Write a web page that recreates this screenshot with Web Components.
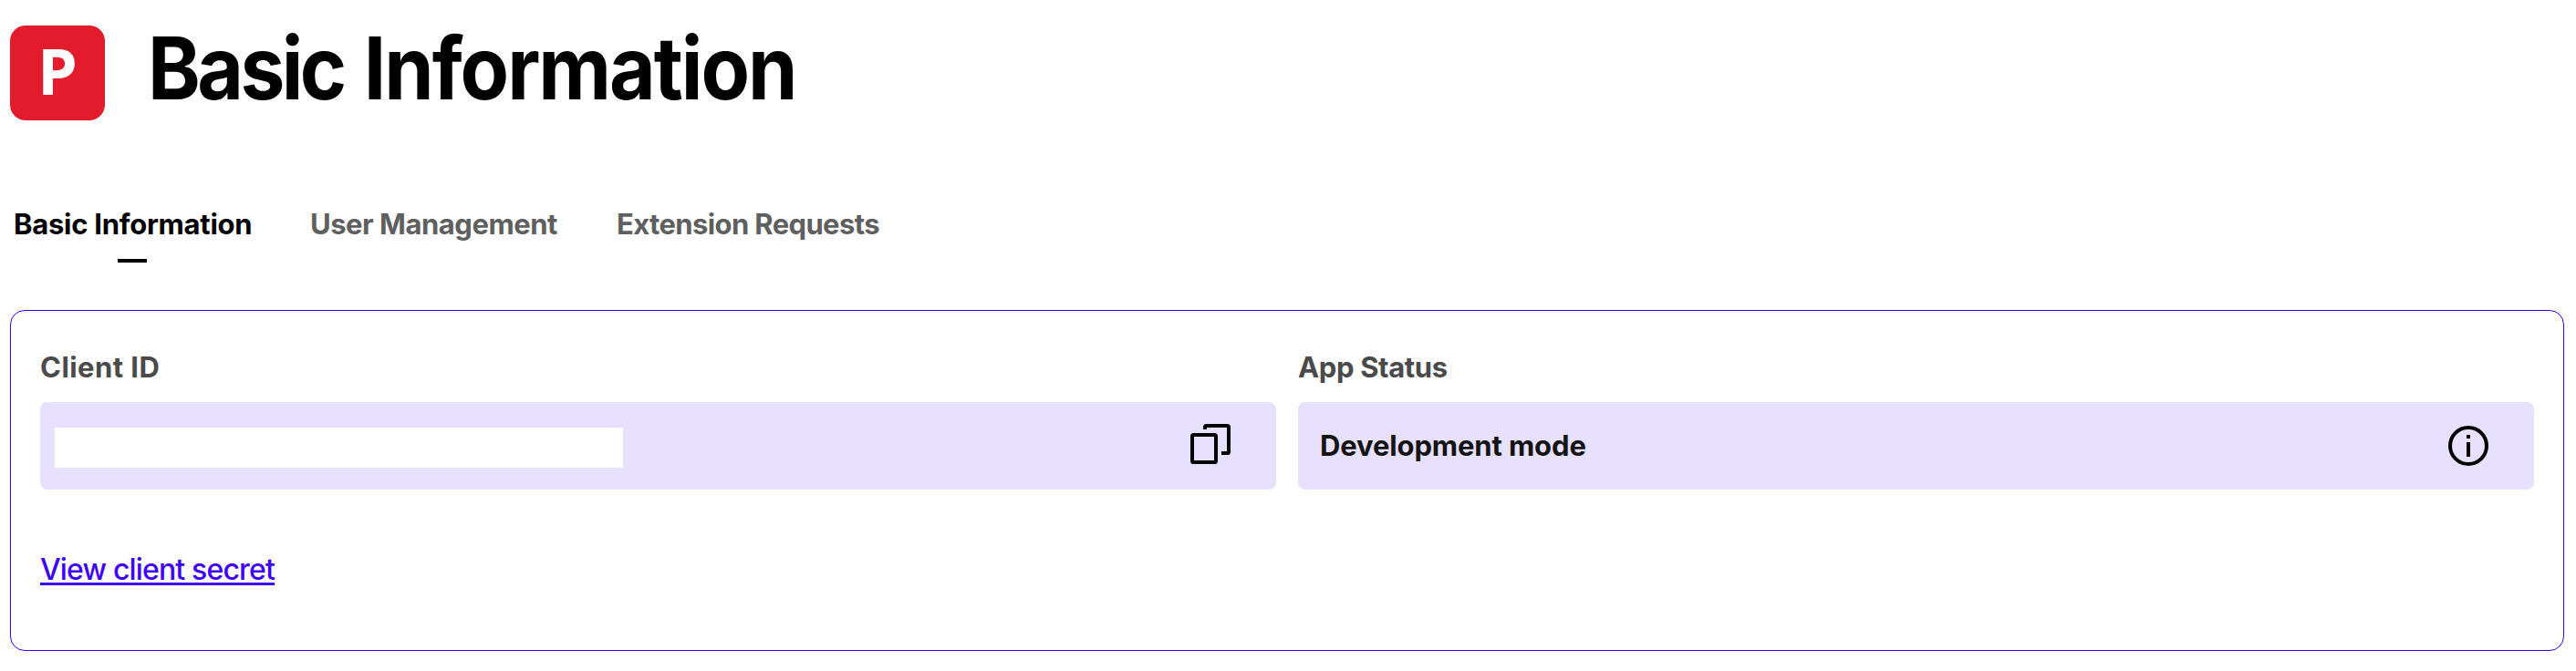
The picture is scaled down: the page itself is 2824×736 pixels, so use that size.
<!DOCTYPE html>
<html lang="en">
<head>
<meta charset="utf-8">
<title>Basic Information</title>
<style>
body { margin: 0; background: #fff; font-family: Inter, "Liberation Sans", sans-serif; }
</style>
</head>
<body>
<app-page>
  <app-header letter="P"><span style="letter-spacing:-3.9px">Basic</span> Information</app-header>
  <app-tabs>
    <app-tab active style="width:260px;letter-spacing:-.26px">Basic Information</app-tab>
    <app-tab style="width:272px;letter-spacing:-.48px">User Management</app-tab>
    <app-tab style="width:292px;letter-spacing:-.62px">Extension Requests</app-tab>
  </app-tabs>
  <app-card>
    <app-field label="Client ID" style="--label-spacing:.45px">
      <span slot="value"><masked-value></masked-value></span>
      <copy-icon slot="icon"></copy-icon>
    </app-field>
    <app-field label="App Status" style="--label-spacing:-.36px">
      <span slot="value" style="padding-left:8px">Development mode</span>
      <info-icon slot="icon"></info-icon>
    </app-field>
    <secret-link slot="footer">View client secret</secret-link>
  </app-card>
</app-page>
<script>
const define = (name, markup, setup) => customElements.define(name, class extends HTMLElement {
  connectedCallback() {
    if (this.shadowRoot) return;
    const root = this.attachShadow({ mode: 'open' });
    root.innerHTML = markup;
    if (setup) setup(this, root);
  }
});

define('app-page', `<style>
  :host { display: flex; flex-direction: column; box-sizing: border-box; height: 736px; padding: 28px 13px 0 11px; }
</style><slot></slot>`);

define('app-header', `<style>
  :host { display: flex; align-items: flex-start; gap: 47px; height: 104px; flex: none; }
  .logo { width: 104px; height: 104px; border-radius: 17px; background: #e31c2d; color: #fff;
    font: 700 70px/98px "Open Sans", sans-serif; text-align: center; }
  h1 { margin: 0; font-size: 95px; line-height: 93px; font-weight: 700; letter-spacing: -2.2px; word-spacing: 3.7px;
    white-space: nowrap; color: #000; transform: scaleX(.92); transform-origin: 0 0; }
</style><div class="logo"></div><h1><slot></slot></h1>`,
(el, root) => { root.querySelector('.logo').textContent = el.getAttribute('letter'); });

define('app-tabs', `<style>
  :host { display: flex; gap: 64px; margin: 94px 0 0 4px; height: 62px; flex: none; }
  ::slotted(:nth-child(2)) { margin-left: 1px; }
</style><slot></slot>`);

define('app-tab', `<style>
  :host { display: flex; flex-direction: column; align-items: center; gap: 18px; flex: none;
    font-size: 31px; line-height: 40px; font-weight: 700; color: #5f5f5f; white-space: nowrap; }
  :host([active]) { color: #000; }
  .text { align-self: stretch; }
  .bar { width: 32px; height: 4px; }
  :host([active]) .bar { background: #000; }
</style><div class="text"><slot></slot></div><div class="bar"></div>`);

define('app-card', `<style>
  :host { display: flex; flex-direction: column; box-sizing: border-box; height: 374px; flex: none; margin-top: 52px;
    padding: 42px 32px 0; border: 1px solid #3d00f5; border-radius: 16px; }
  .fields { display: grid; grid-template-columns: 1fr 1fr; gap: 24px; }
  .footer { margin-top: 68px; line-height: 40px; }
</style><div class="fields"><slot></slot></div><div class="footer"><slot name="footer"></slot></div>`);

define('app-field', `<style>
  :host { display: flex; flex-direction: column; gap: 18px; font-size: 31px; line-height: 40px; font-weight: 700; }
  .label { color: #4a4a4a; letter-spacing: var(--label-spacing); }
  .box { display: flex; align-items: center; justify-content: space-between; box-sizing: border-box; height: 96px;
    padding: 0 50px 0 16px; border-radius: 8px; background: #e7e0ff; color: #141414; letter-spacing: -.13px; }
</style><div class="label"></div><div class="box"><slot name="value"></slot><slot name="icon"></slot></div>`,
(el, root) => { root.querySelector('.label').textContent = el.getAttribute('label'); });

define('masked-value', `<style>
  :host { display: block; width: 623px; height: 44px; margin-top: 4px; background: #fff; }
</style>`);

define('copy-icon', `<style>
  :host { display: block; width: 44px; height: 44px; margin-bottom: 4px; }
  svg { display: block; }
</style><svg width="44" height="44" viewBox="0 0 44 44" fill="none" stroke="#000" stroke-width="4">
  <rect x="2" y="12" width="26" height="30" rx="1.6"/>
  <path d="M16 6V3.6Q16 2 17.6 2H40.4Q42 2 42 3.6V30.4Q42 32 40.4 32H34"/>
</svg>`);

define('info-icon', `<style>
  :host { display: block; width: 44px; height: 44px; }
  svg { display: block; }
</style><svg width="44" height="44" viewBox="0 0 44 44">
  <circle cx="22" cy="22" r="20" fill="none" stroke="#000" stroke-width="4"/>
  <path d="M20 10h4v4h-4zM20 18h4v16h-4z" fill="#000"/>
</svg>`);

define('secret-link', `<style>
  :host { display: block; font-size: 32px; line-height: 40px; font-weight: 500; letter-spacing: -.84px; }
  a { color: #3d00f5; text-decoration: underline; text-decoration-thickness: 3px; text-underline-offset: 3px;
    text-decoration-skip-ink: none; }
</style><a href="#"><slot></slot></a>`);
</script>
</body>
</html>
